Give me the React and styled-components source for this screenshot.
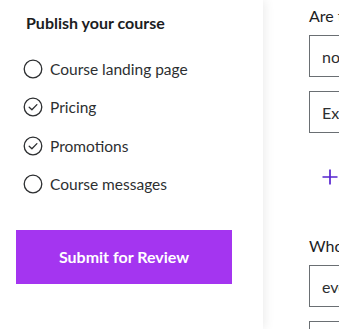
import styled, { createGlobalStyle } from 'styled-components';

const GlobalStyle = createGlobalStyle`
  html, body {
    margin: 0;
    padding: 0;
    background: #ffffff;
    overflow: hidden;
  }
  body {
    font-family: Lato, "Open Sans", sans-serif;
    color: #1c1d1f;
  }
`;

const steps = [
  { label: 'Course landing page', done: false },
  { label: 'Pricing', done: true },
  { label: 'Promotions', done: true },
  { label: 'Course messages', done: false },
];

const StepIcon = ({ done }) => (
  <svg width="20" height="20" viewBox="0 0 20 20" fill="none">
    <circle cx="10" cy="10" r="8.8" stroke="#2d2f31" strokeWidth="1.3" />
    {done && (
      <path d="M6.2 10.2 L8.9 12.8 L13.9 7.6" stroke="#2d2f31" strokeWidth="1.3" strokeLinecap="round" strokeLinejoin="round" />
    )}
  </svg>
);

const App = () => {
  return (
    <>
      <GlobalStyle />
      <Page>
        <Sidebar>
          <Title>Publish your course</Title>
          <StepList>
            {steps.map((step) => (
              <Step key={step.label}>
                <StepIcon done={step.done} />
                <span>{step.label}</span>
              </Step>
            ))}
          </StepList>
          <SubmitButton>Submit for Review</SubmitButton>
        </Sidebar>
        <Main>
          <Label>Are there any course requirements</Label>
          <Field>
            <span>no prerequisites</span>
          </Field>
          <Field>
            <span>Example: No programming experience needed</span>
          </Field>
          <AddButton aria-label="Add requirement">
            <svg width="16" height="16" viewBox="0 0 16 16" fill="none">
              <path d="M8 0.5 V15.5 M0.5 8 H15.5" stroke="#5624d0" strokeWidth="1.7" />
            </svg>
          </AddButton>
          <Label $spaced>Who is this course for?</Label>
          <Field>
            <span>everyone</span>
          </Field>
          <Field />
        </Main>
      </Page>
    </>
  );
};

export default App;

const Page = styled.div`
  display: flex;
  width: 339px;
  height: 329px;
  overflow: hidden;
`;

const Sidebar = styled.aside`
  position: relative;
  z-index: 1;
  flex: 0 0 263px;
  padding: 13px 0 0 16px;
  box-sizing: border-box;
  background: #ffffff;
  box-shadow: 2px 0 10px rgba(0, 0, 0, 0.08);
`;

const Title = styled.h2`
  margin: 0 0 0 10px;
  font-size: 16px;
  font-weight: 700;
  line-height: 20px;
  color: #1c1d1f;
`;

const StepList = styled.ul`
  list-style: none;
  margin: 26px 0 0 7px;
  padding: 0;
  display: flex;
  flex-direction: column;
  gap: 18.3px;
`;

const Step = styled.li`
  display: flex;
  align-items: center;
  gap: 7px;
  height: 20px;
  font-size: 15.5px;
  color: #2d2f31;
`;

const SubmitButton = styled.button`
  display: block;
  margin-top: 36px;
  width: 216px;
  height: 54px;
  border: none;
  background: #a435f0;
  color: #ffffff;
  font-family: Lato, "Open Sans", sans-serif;
  font-size: 16px;
  font-weight: 700;
  cursor: pointer;
`;

const Main = styled.main`
  flex: 1 0 auto;
  min-width: 0;
  padding: 6px 0 0 46px;
  display: flex;
  flex-direction: column;
  white-space: nowrap;
`;

const Label = styled.div`
  font-size: 16px;
  line-height: 20px;
  color: #1c1d1f;
  margin-top: ${({ $spaced }) => ($spaced ? '51px' : '0')};
  & + div {
    margin-top: 9px;
  }
`;

const Field = styled.div`
  margin-top: 14px;
  flex: 0 0 auto;
  height: 42px;
  width: 300px;
  border: 1px solid #6a6f73;
  box-sizing: border-box;
  display: flex;
  align-items: center;
  padding: 0 12px;
  font-size: 16px;
  color: #2d2f31;
`;

const AddButton = styled.div`
  display: flex;
  margin: 36px 0 0 13px;
  width: 16px;
  height: 16px;
`;
